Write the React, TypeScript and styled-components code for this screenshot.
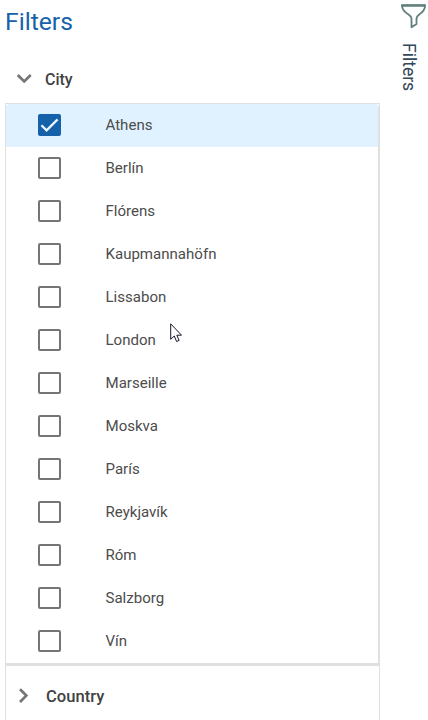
import React from "react";
import styled, { createGlobalStyle } from "styled-components";

const GlobalStyle = createGlobalStyle`
  * { box-sizing: border-box; }
  html, body { margin: 0; background: #fff; overflow: hidden; }
  body { font-family: Roboto, sans-serif; color: #4a4a4a; }
`;

const Page = styled.div`
  position: relative;
  display: flex;
  width: 428px;
  height: 720px;
  overflow: hidden;
`;

const Panel = styled.main`
  width: 375px;
  margin-left: 5px;
  flex: none;
`;

const Title = styled.h1`
  margin: 0;
  height: 55px;
  padding-top: 8px;
  font-size: 24.7px;
  line-height: 28px;
  font-weight: 400;
  color: #1662aa;
`;

const GroupHeader = styled.div<{ $height: number; $indent: number; $gap: number; $size: number }>`
  display: flex;
  align-items: center;
  height: ${(p) => p.$height}px;
  padding-left: ${(p) => p.$indent}px;
  gap: ${(p) => p.$gap}px;
  font-size: ${(p) => p.$size}px;
  font-weight: 500;
  color: #424242;

  svg { flex: none; }
`;

const GroupBody = styled.div`
  border: 1px solid #dfe0e0;
  border-bottom: 0;
`;

const OptionList = styled.ul`
  list-style: none;
  margin: 0;
  padding: 0;
  border-right: 1px solid #dfe1e1;
  border-bottom: 2px solid #dfe1e1;
  border-radius: 4px 4px 0 0;
  overflow: hidden;
`;

const Option = styled.li<{ $selected: boolean }>`
  display: flex;
  align-items: center;
  height: 43px;
  padding: 0 0 2px 32px;
  gap: 44.5px;
  font-size: 15.05px;
  color: #4c4c4c;
  background: ${(p) => (p.$selected ? "#e0f2ff" : "#fff")};
`;

const CheckBox = styled.span<{ $checked: boolean }>`
  display: flex;
  width: 23px;
  height: 22px;
  flex: none;
  border: 2px solid ${(p) => (p.$checked ? "#1662aa" : "#757575")};
  border-radius: 2px;
  background: ${(p) => (p.$checked ? "#1662aa" : "#fff")};
`;

const NextGroup = styled.div`
  height: 55px;
  border: 1px solid #dfe0e0;
  border-bottom: 0;
`;

const SideTab = styled.aside`
  display: flex;
  flex-direction: column;
  align-items: center;
  width: 28px;
  margin-left: 19px;
  padding-top: 3px;
`;

const SideLabel = styled.span`
  writing-mode: vertical-rl;
  margin-top: 12px;
  margin-right: 9px;
  font-size: 17.5px;
  line-height: 20px;
  color: #35475a;
`;

const Pointer = styled.svg`
  position: absolute;
  left: 170px;
  top: 323px;
`;

const cities = [
  "Athens", "Berlín", "Flórens", "Kaupmannahöfn", "Lissabon", "London", "Marseille",
  "Moskva", "París", "Reykjavík", "Róm", "Salzborg", "Vín",
];

export default function App() {
  return (
    <Page>
      <GlobalStyle />
      <Panel>
        <Title>Filters</Title>
        <GroupHeader $height={48} $indent={11} $gap={13} $size={16}>
          <svg width="16" height="12" viewBox="0 0 16 12" fill="none" stroke="#757575" strokeWidth="2.7">
            <path d="M1.7 2 8.2 8.4 14.7 2" />
          </svg>
          City
        </GroupHeader>
        <GroupBody>
          <OptionList>
            {cities.map((city, i) => (
              <Option key={city} $selected={i === 0}>
                <CheckBox $checked={i === 0}>
                  {i === 0 && (
                    <svg width="19" height="18" viewBox="0 0 19 18" fill="none" stroke="#e9f6ff" strokeWidth="2.3">
                      <path d="M1.4 9.2 6.6 14.3 17.6 3.4" />
                    </svg>
                  )}
                </CheckBox>
                {city}
              </Option>
            ))}
          </OptionList>
        </GroupBody>
        <NextGroup>
          <GroupHeader $height={60} $indent={11} $gap={13} $size={16.6}>
            <svg width="16" height="16" viewBox="0 0 16 16" fill="none" stroke="#757575" strokeWidth="2.7">
              <path d="M3 1.2 9.3 7.6 3 14" />
            </svg>
            Country
          </GroupHeader>
        </NextGroup>
      </Panel>
      <SideTab>
        <svg width="28" height="28" viewBox="0 0 28 28" fill="none" stroke="#607f7d" strokeWidth="1.8" strokeLinejoin="round">
          <path d="M3 2.500h23q.2 5-5.800 9-2.700 2-2.700 4v5.500l-5 3.300V15.500q0-2-3-4Q3 7.500 3 2.500Z" />
          <path d="M2.200 2.400h24.500" strokeWidth="2.200" />
        </svg>
        <SideLabel>Filters</SideLabel>
      </SideTab>
      <Pointer width="13" height="21" viewBox="0 0 13 21">
        <path d="M.7.8v15.500l3.600-3.300 2.300 5.500 2.500-1.100-2.300-5.200h4.700Z" fill="#fff" stroke="#171728" strokeWidth="1" />
      </Pointer>
    </Page>
  );
}
